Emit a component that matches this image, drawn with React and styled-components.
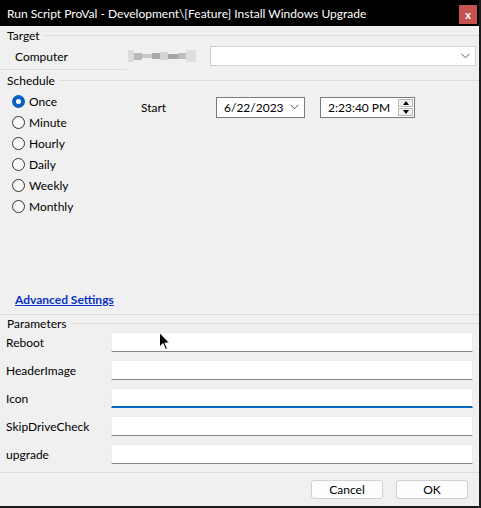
import React from "react";
import styled, { createGlobalStyle } from "styled-components";

const Global = createGlobalStyle`
  html, body { margin: 0; padding: 0; background: #f0f0f0; }
  body { font-family: Lato, "Noto Sans", sans-serif; font-size: 12px; color: #000; }
  * { box-sizing: border-box; }
`;

const Window = styled.div`
  position: relative;
  width: 481px;
  height: 508px;
  background: #f0f0f0;
  border-right: 2px solid #1c1c1c;
  border-bottom: 2px solid #1c1c1c;
  display: flex;
  flex-direction: column;
  overflow: hidden;
`;

const TitleBar = styled.div`
  height: 26px;
  background: #000;
  color: #fff;
  display: flex;
  align-items: center;
  justify-content: space-between;
  padding: 0 2px 0 7px;
  font-size: 12px;
  flex-shrink: 0;
`;

const CloseBtn = styled.div`
  width: 18px;
  height: 19px;
  background: #c75050;
  color: #fff;
  font-size: 11px;
  font-weight: bold;
  display: flex;
  align-items: center;
  justify-content: center;
  margin-top: 2px;
`;

const GroupHeader = styled.div`
  display: flex;
  align-items: center;
  height: ${(p) => p.$h || 14}px;
  margin-top: ${(p) => p.$mt || 0}px;
  padding-left: 7px;
  font-size: 12px;
  & > span { padding-right: 4px; white-space: nowrap; }
  &::after {
    content: "";
    flex: 1;
    height: 1px;
    background: #dcdcdc;
  }
`;

const TargetRow = styled.div`
  display: flex;
  align-items: center;
  height: 20px;
  margin-top: 4px;
`;

const TargetLabel = styled.div`
  width: 128px;
  padding-left: 15px;
  align-self: stretch;
  display: flex;
  align-items: center;
`;

const Blurred = styled.div`
  width: 80px;
  height: 16px;
  display: flex;
  align-items: center;
`;

const BlurPix = styled.div`
  width: ${(p) => p.$w}px;
  height: ${(p) => p.$hh || 5}px;
  background: ${(p) => p.$c};
`;

const Combo = styled.div`
  width: 266px;
  height: 20px;
  margin-left: 2px;
  background: #fff;
  border: 1px solid #d0d0d0;
  display: flex;
  align-items: center;
  justify-content: flex-end;
  padding-right: 5px;
`;

const Divider = styled.div`
  height: 1px;
  width: ${(p) => p.$w || "100%"};
  background: #dcdcdc;
  margin-top: ${(p) => p.$mt || 0}px;
`;

const ScheduleBody = styled.div`
  display: flex;
  height: 204px;
  padding-top: 4px;
`;

const RadioList = styled.div`
  display: flex;
  flex-direction: column;
  padding-left: 12px;
  width: 141px;
`;

const RadioRow = styled.label`
  display: flex;
  align-items: center;
  height: 21px;
  gap: 4px;
`;

const RadioCircle = styled.span`
  width: 13px;
  height: 13px;
  border-radius: 50%;
  border: ${(p) => (p.$checked ? "none" : "1px solid #333")};
  background: ${(p) => (p.$checked ? "#0a5fc0" : "#fafafa")};
  display: flex;
  align-items: center;
  justify-content: center;
  &::after {
    content: "";
    width: 5px;
    height: 5px;
    border-radius: 50%;
    background: ${(p) => (p.$checked ? "#fff" : "transparent")};
  }
`;

const StartRow = styled.div`
  display: flex;
  align-items: center;
  height: 20px;
  margin-top: 6px;
`;

const StartLabel = styled.div`
  width: 75px;
`;

const DateBox = styled.div`
  width: 89px;
  height: 21px;
  background: #fff;
  border: 1px solid #7a7a7a;
  display: flex;
  align-items: center;
  justify-content: space-between;
  padding: 0 5px 0 7px;
`;

const TimeBox = styled.div`
  width: 95px;
  height: 21px;
  margin-left: 15px;
  background: #fff;
  border: 1px solid #7a7a7a;
  display: flex;
  align-items: center;
  justify-content: space-between;
  padding: 1px 1px 1px 7px;
`;

const Spinner = styled.div`
  width: 15px;
  height: 17px;
  display: flex;
  flex-direction: column;
  gap: 1px;
`;

const SpinBtn = styled.div`
  flex: 1;
  background: #f2f2f2;
  border: 1px solid #b9b9b9;
  display: flex;
  align-items: center;
  justify-content: center;
`;

const Arrow = styled.span`
  width: 0;
  height: 0;
  border-left: 3px solid transparent;
  border-right: 3px solid transparent;
  ${(p) => (p.$up ? "border-bottom: 4px solid #000;" : "border-top: 4px solid #000;")}
`;

const Link = styled.a`
  display: block;
  margin: 0 0 0 15px;
  height: 17px;
  line-height: 17px;
  color: #0b30c8;
  font-weight: bold;
  text-decoration: underline;
  font-size: 12px;
`;

const ParamList = styled.div`
  display: flex;
  flex-direction: column;
  gap: 8px;
  margin-top: 2px;
`;

const ParamRow = styled.div`
  display: flex;
  align-items: center;
  height: 20px;
`;

const ParamLabel = styled.div`
  width: 111px;
  padding-left: 6px;
  font-size: 12px;
`;

const ParamInput = styled.div`
  width: 362px;
  height: 20px;
  background: #fff;
  border: 1px solid #ececec;
  border-bottom: ${(p) => (p.$focus ? "2px solid #0067c0" : "1px solid #858585")};
  border-radius: 2px 2px 0 0;
`;

const Footer = styled.div`
  display: flex;
  justify-content: flex-end;
  gap: 13px;
  padding-right: 11px;
  margin-top: 7px;
`;

const Button = styled.button`
  width: 72px;
  height: 19px;
  background: #fdfdfd;
  border: 1px solid #d0d0d0;
  border-radius: 3px;
  font-family: inherit;
  font-size: 12px;
  color: #000;
  padding: 0;
`;

const Cursor = styled.svg`
  position: absolute;
  left: 159px;
  top: 332px;
`;

const Chevron = () => (
  <svg width="9" height="6" viewBox="0 0 9 6">
    <path d="M0.5 0.8 L4.5 4.8 L8.5 0.8" fill="none" stroke="#555" strokeWidth="1" />
  </svg>
);

const options = ["Once", "Minute", "Hourly", "Daily", "Weekly", "Monthly"];
const params = ["Reboot", "HeaderImage", "Icon", "SkipDriveCheck", "upgrade"];

export default function App() {
  return (
    <>
      <Global />
      <Window>
        <TitleBar>
          <span>Run Script ProVal - Development\[Feature] Install Windows Upgrade</span>
          <CloseBtn>x</CloseBtn>
        </TitleBar>

        <GroupHeader $mt={2} $h={14}>
          <span>Target</span>
        </GroupHeader>
        <TargetRow>
          <TargetLabel>Computer</TargetLabel>
          <Blurred>
            <BlurPix $w={6} $c="#dcdcdc" $hh={12} />
            <BlurPix $w={8} $c="#b8b8b8" $hh={7} />
            <BlurPix $w={10} $c="#c8c8c8" $hh={4} />
            <BlurPix $w={8} $c="#a9a9a9" $hh={6} />
            <BlurPix $w={8} $c="#d3d3d3" $hh={8} />
            <BlurPix $w={10} $c="#a5a5a5" $hh={5} />
            <BlurPix $w={8} $c="#bcbcbc" $hh={6} />
            <BlurPix $w={10} $c="#dedede" $hh={12} />
          </Blurred>
          <Combo>
            <Chevron />
          </Combo>
        </TargetRow>
        <Divider $w="127px" $mt={3} />

        <GroupHeader $mt={3} $h={14}>
          <span>Schedule</span>
        </GroupHeader>
        <ScheduleBody>
          <RadioList>
            {options.map((o, i) => (
              <RadioRow key={o}>
                <RadioCircle $checked={i === 0} />
                {o}
              </RadioRow>
            ))}
          </RadioList>
          <StartRow>
            <StartLabel>Start</StartLabel>
            <DateBox>
              6/22/2023
              <Chevron />
            </DateBox>
            <TimeBox>
              2:23:40 PM
              <Spinner>
                <SpinBtn>
                  <Arrow $up />
                </SpinBtn>
                <SpinBtn>
                  <Arrow />
                </SpinBtn>
              </Spinner>
            </TimeBox>
          </StartRow>
        </ScheduleBody>

        <Link href="#">Advanced Settings</Link>
        <Divider $mt={6} />
        <GroupHeader $mt={1} $h={14}>
          <span>Parameters</span>
        </GroupHeader>
        <ParamList>
          {params.map((p) => (
            <ParamRow key={p}>
              <ParamLabel>{p}</ParamLabel>
              <ParamInput $focus={p === "Icon"} />
            </ParamRow>
          ))}
        </ParamList>
        <Divider $mt={8} />
        <Footer>
          <Button>Cancel</Button>
          <Button>OK</Button>
        </Footer>

        <Cursor width="12" height="19" viewBox="0 0 12 19">
          <path d="M0.5 0.5 L0.5 15 L4 11.5 L6.5 17.5 L8.5 16.5 L6 11 L10.5 11 Z" fill="#000" stroke="#fff" strokeWidth="1" />
        </Cursor>
      </Window>
    </>
  );
}
